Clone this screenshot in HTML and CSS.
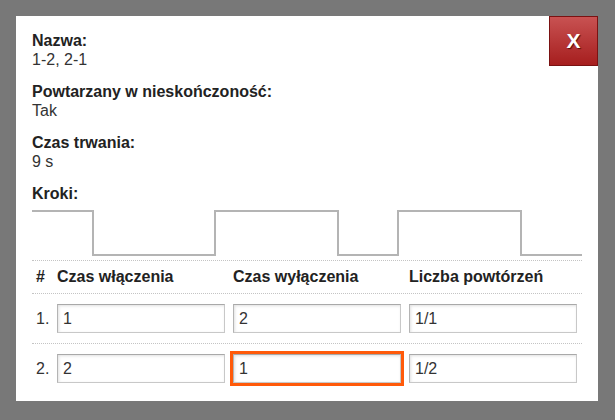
FILE: index.html
```html
<!DOCTYPE html>
<html lang="pl">
<head>
<meta charset="utf-8">
<title>Program</title>
<link rel="stylesheet" href="styles.css">
</head>
<body>
<div class="dialog">
  <button class="close" type="button">X</button>
  <div class="field">
    <div class="label">Nazwa:</div>
    <div class="value">1-2, 2-1</div>
  </div>
  <div class="field">
    <div class="label">Powtarzany w nieskończoność:</div>
    <div class="value">Tak</div>
  </div>
  <div class="field">
    <div class="label">Czas trwania:</div>
    <div class="value">9 s</div>
  </div>
  <div class="label">Kroki:</div>
  <svg class="wave" width="550" height="48" viewBox="0 0 550 48">
    <polyline points="0,2 61,2 61,46 183,46 183,2 306,2 306,46 366,46 366,2 489,2 489,46 550,46" fill="none" stroke="#b4b4b4" stroke-width="2"/>
  </svg>
  <div class="steps">
    <div class="row head">
      <div class="cell num">#</div>
      <div class="cell">Czas włączenia</div>
      <div class="cell">Czas wyłączenia</div>
      <div class="cell">Liczba powtórzeń</div>
    </div>
    <div class="row">
      <div class="cell num">1.</div>
      <div class="cell"><input class="inp" type="text" value="1"></div>
      <div class="cell"><input class="inp" type="text" value="2"></div>
      <div class="cell"><input class="inp" type="text" value="1/1"></div>
    </div>
    <div class="row">
      <div class="cell num">2.</div>
      <div class="cell"><input class="inp" type="text" value="2"></div>
      <div class="cell"><input class="inp focus" type="text" value="1"></div>
      <div class="cell"><input class="inp" type="text" value="1/2"></div>
    </div>
  </div>
</div>
</body>
</html>
```

FILE: styles.css
```css
html, body {
  margin: 0;
  padding: 0;
}
body {
  background: #787878;
  font-family: "Liberation Sans", Arial, sans-serif;
  color: #222;
  width: 615px;
  height: 420px;
  overflow: hidden;
}
.dialog {
  position: relative;
  margin: 16px 0 0 16px;
  width: 582px;
  box-sizing: border-box;
  padding: 15px 16px 8px 16px;
  background: #fff;
}
.close {
  position: absolute;
  top: 0;
  right: 0;
  width: 49px;
  height: 50px;
  box-sizing: border-box;
  margin: 0;
  padding: 0;
  border: 1px solid #7a1212;
  background: linear-gradient(#c85252, #a61e1e);
  color: #fff;
  font-family: "Liberation Sans", Arial, sans-serif;
  font-weight: bold;
  font-size: 21px;
  line-height: 46px;
  text-align: center;
  text-shadow: 1px 1px 1px rgba(60, 0, 0, 0.8);
}
.field {
  margin-bottom: 13px;
}
.label {
  font-size: 16px;
  font-weight: bold;
  line-height: 19px;
  color: #222;
}
.value {
  font-size: 16px;
  line-height: 19px;
  color: #333;
}
.wave {
  display: block;
  margin: 6px 0 3px 0;
}
.steps {
  border-top: 1px dotted #c4c4c4;
}
.row {
  display: grid;
  grid-template-columns: 25px 176px 176px 173px;
  align-items: center;
  border-bottom: 1px dotted #c4c4c4;
  padding: 10px 0;
}
.row:last-child {
  border-bottom: none;
}
.row.head {
  padding: 6px 0 7px 0;
  font-size: 16px;
  font-weight: bold;
  line-height: 19px;
  color: #222;
}
.cell {
  line-height: 19px;
}
.num {
  padding-left: 4px;
  font-size: 16px;
  color: #333;
}
.head .num {
  color: #222;
}
.inp {
  display: block;
  width: 168px;
  height: 29px;
  box-sizing: border-box;
  margin: 0;
  padding: 0 5px;
  border: 1px solid #c8c8c8;
  border-top-color: #a9a9a9;
  border-left-color: #b4b4b4;
  box-shadow: inset 1px 1px 3px rgba(0, 0, 0, 0.12);
  background: #fff;
  font-family: "Liberation Sans", Arial, sans-serif;
  font-size: 16px;
  color: #333;
  outline: none;
}
.inp.focus {
  outline: 3px solid #ff5a0a;
}
```
